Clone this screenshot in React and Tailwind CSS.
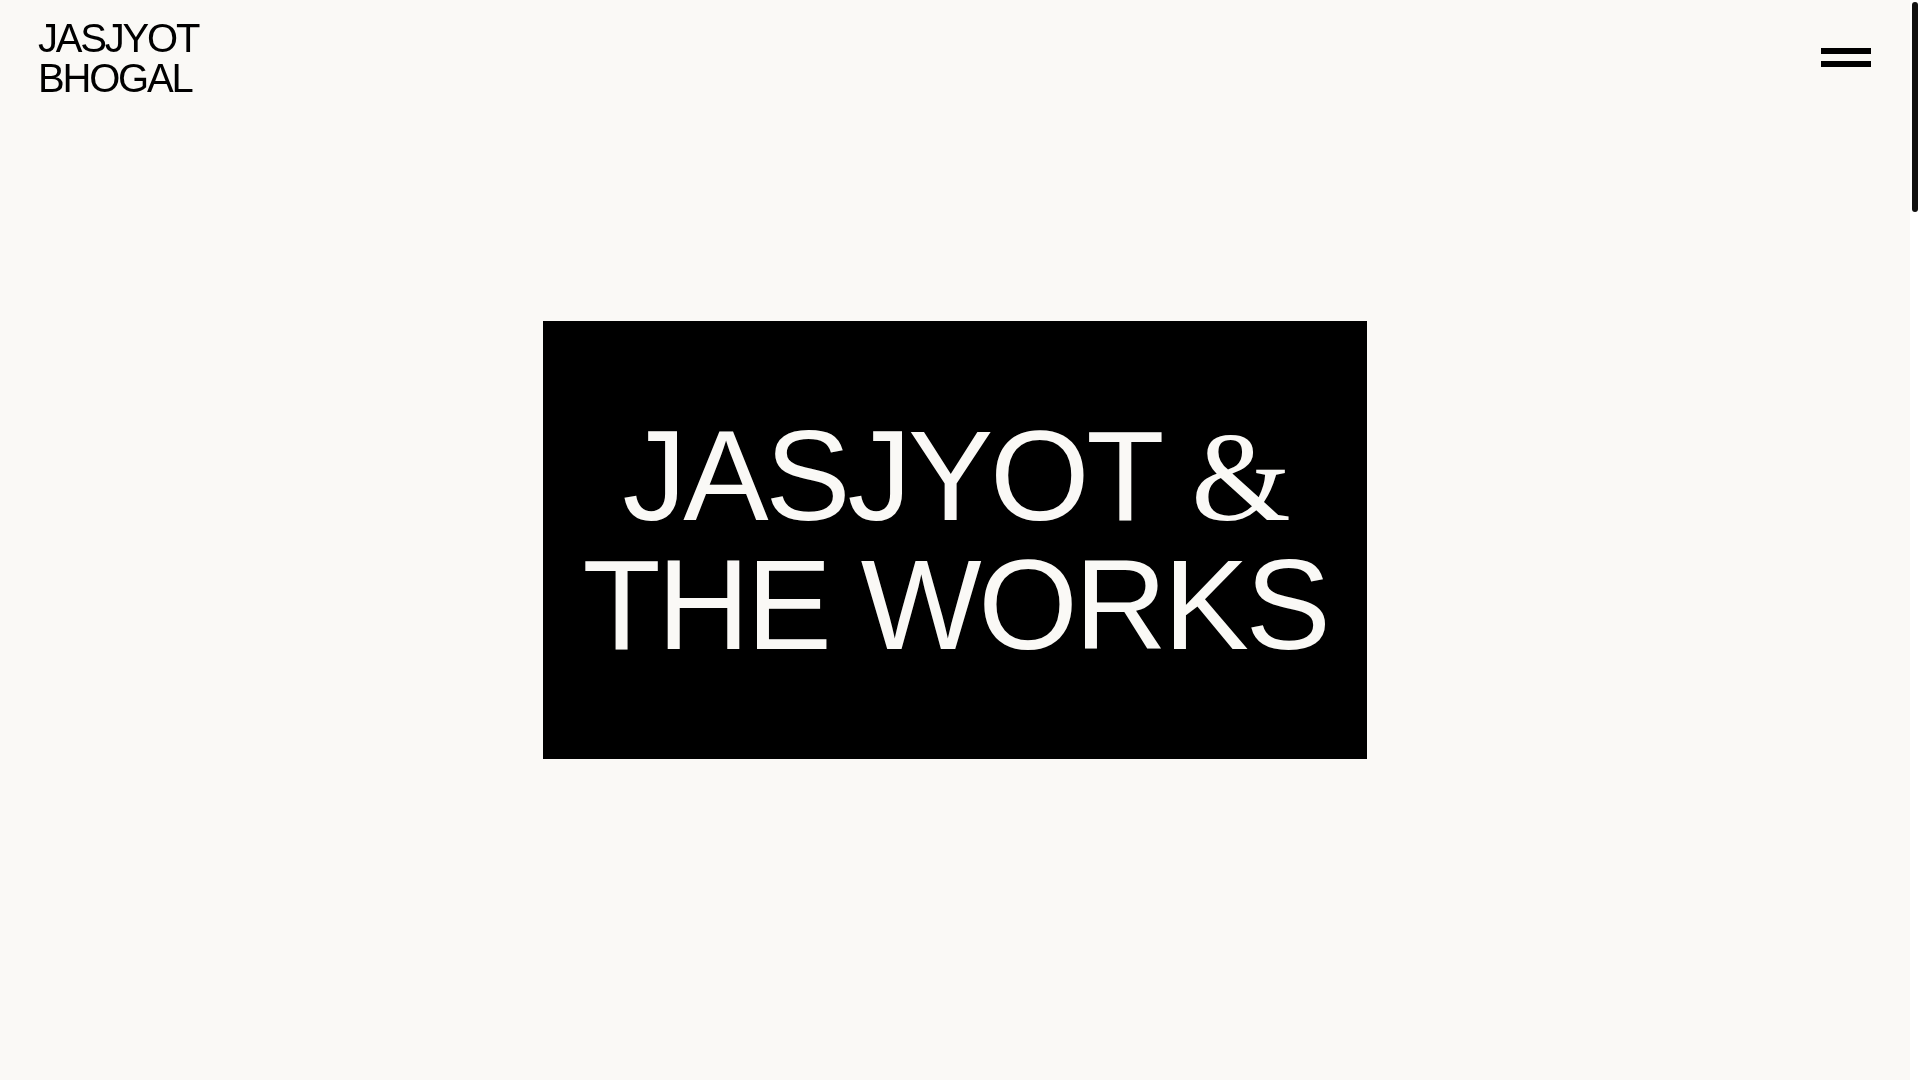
export default function App() {
  return (
    <div className="flex h-screen w-full overflow-hidden bg-[#faf9f6] text-black" style={{ fontFamily: '"Liberation Sans", Arial, sans-serif' }}>
      <div className="relative flex-1 h-full">
        <header className="fixed top-0 left-0 right-[10px] flex items-start justify-between pl-[38px] pr-10 pt-[18px]">
          <a className="block text-[40px] leading-[40px] tracking-[-0.055em] text-black">
            JASJYOT
            <br />
            BHOGAL
          </a>
          <button className="mt-[30px] mr-[-1px] flex w-[50px] flex-col gap-[7px]" aria-label="Menu">
            <span className="block h-[6px] w-full bg-black" />
            <span className="block h-[6px] w-full bg-black" />
          </button>
        </header>
        <main className="flex h-screen items-center justify-center">
          <div className="flex h-[438px] w-[824px] items-center justify-center bg-black">
            <h1 className="text-center text-[128px] leading-[127px] tracking-[-0.026em] text-[#faf9f6]">
              JASJYOT{' '}
              <span style={{ fontFamily: '"Liberation Serif", "Times New Roman", serif' }}>&amp;</span>
              <br />
              THE WORKS
            </h1>
          </div>
        </main>
      </div>
      <div className="h-full w-[10px] shrink-0 bg-white pt-[2px]">
        <div className="mx-auto h-[210px] w-[6px] rounded-full bg-[#111]" />
      </div>
    </div>
  );
}
